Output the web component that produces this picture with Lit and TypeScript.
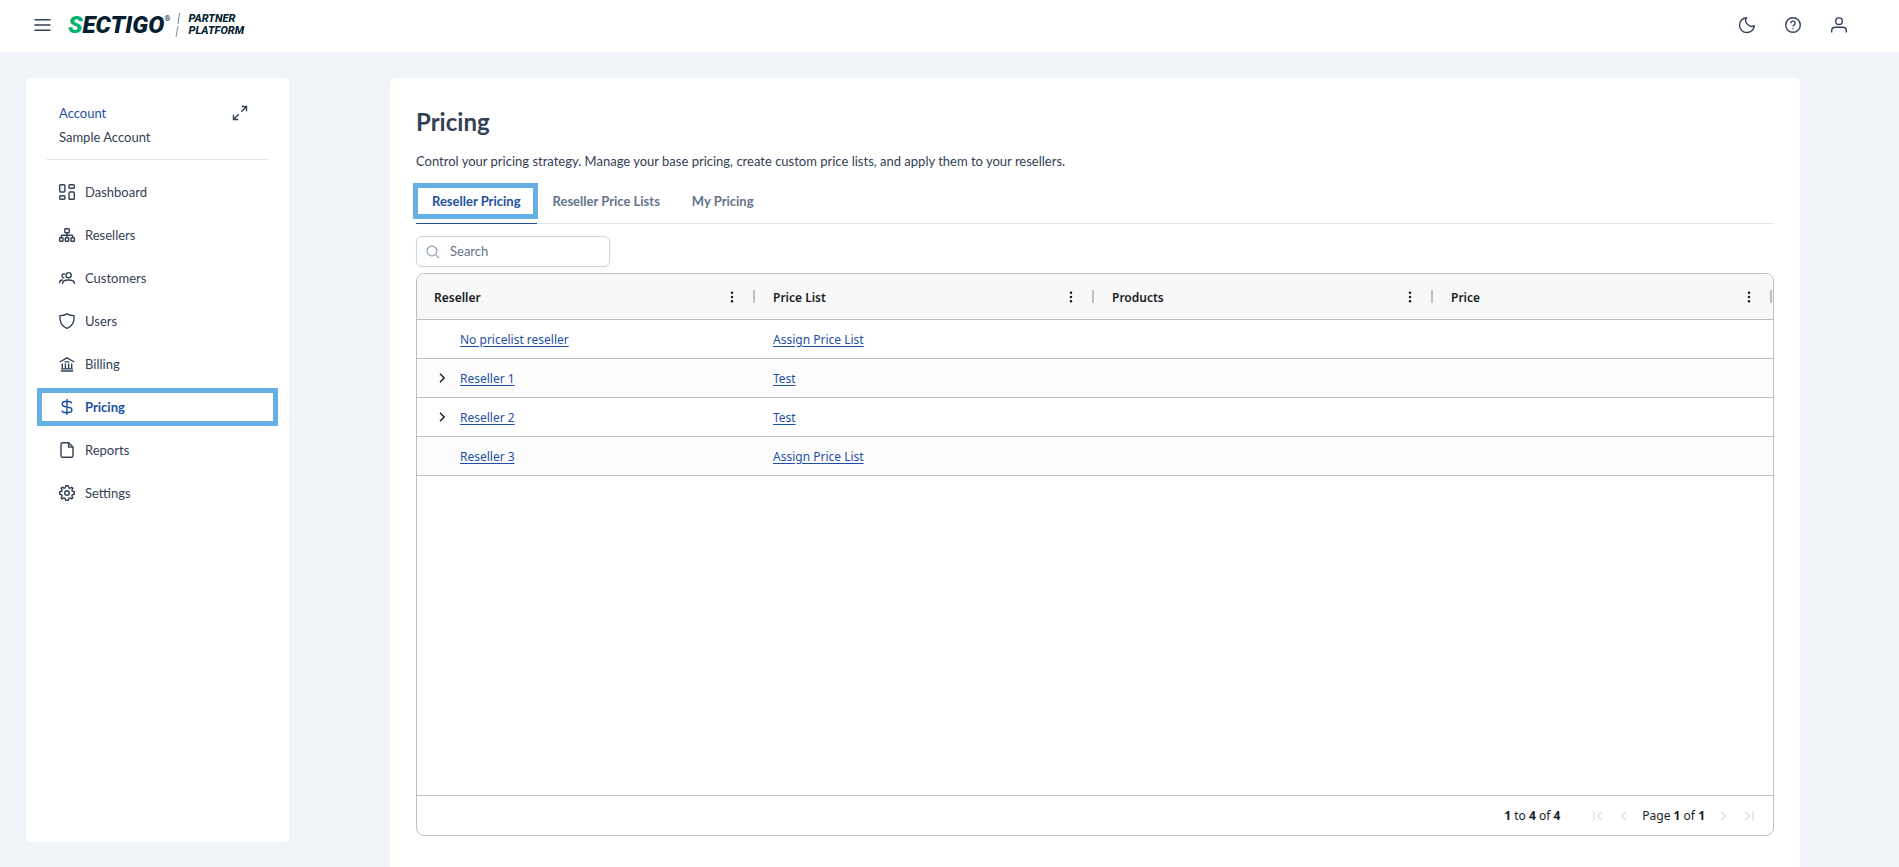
import { LitElement, html, svg, css, nothing } from "lit";
import type { SVGTemplateResult } from "lit";
import { customElement, property, state } from "lit/decorators.js";
import { classMap } from "lit/directives/class-map.js";

const glyphs: Record<string, SVGTemplateResult> = {
  menu: svg`<path d="M0 2.7H16M0 8H16M0 13.3H16"/>`,
  moon: svg`<path d="M7.2 .8A6.2 6.2 0 0 0 15.3 8.9 7.4 7.4 0 1 1 7.2 .8Z"/>`,
  help: svg`<circle cx="8" cy="8" r="7.3"/><path d="M5.9 6.2A2.1 2.1 0 1 1 8.9 8.1C8.2 8.5 8 8.8 8 9.6"/><path d="M8 11.3V12.2" stroke-width="1.5"/>`,
  user: svg`<circle cx="8" cy="4.2" r="3.3"/><path d="M.7 15.4V13.6C.7 11.5 2.4 10.3 4.4 10.3H11.6C13.6 10.3 15.3 11.5 15.3 13.6V15.4"/>`,
  expand: svg`<path d="M9.8 1.5H14.5V6.2M14.5 1.5L9.3 6.7M1.5 9.8V14.5H6.2M1.5 14.5L6.7 9.3"/>`,
  dashboard: svg`<rect x=".7" y=".7" width="5.2" height="7.3" rx=".9"/><rect x="10" y=".7" width="5.3" height="3.6" rx=".9"/><rect x=".7" y="11.7" width="5.2" height="3.6" rx=".9"/><rect x="10" y="8" width="5.3" height="7.3" rx=".9"/>`,
  sitemap: svg`<rect x="5.8" y="1.7" width="4.4" height="4" rx=".7"/><rect x=".6" y="10.8" width="3.4" height="3.5" rx=".6"/><rect x="6.3" y="10.8" width="3.4" height="3.5" rx=".6"/><rect x="12" y="10.8" width="3.4" height="3.5" rx=".6"/><path d="M8 5.7V10.8M2.3 10.8V8.9Q2.3 8.2 3 8.2H13Q13.7 8.2 13.7 8.9V10.8"/>`,
  users: svg`<circle cx="9.6" cy="5.2" r="2.6"/><path d="M3.6 14V13.3C3.6 11.3 5.8 10 9.5 10S15.4 11.3 15.4 13.3V14M6.1 4.2A2 2 0 1 0 5.4 7.8M.6 13.3V12.6C.6 11.1 1.8 10.2 3.8 9.8"/>`,
  shield: svg`<path d="M8 .8C5.8 2.1 3.2 2.6 1 2.6 .4 8.6 2.4 13.2 8 15.3 13.6 13.2 15.6 8.6 15 2.6 12.8 2.6 10.2 2.1 8 .8Z"/>`,
  bank: svg`<path d="M.7 6L8 1.9 15.3 6M1.8 15H14.2M2.2 12.9H13.8M3.3 7.4V12.7M6.4 7.4V12.7M9.6 7.4V12.7M12.7 7.4V12.7M5.5 5.9H10.5"/>`,
  dollar: svg`<path d="M8 0V16M12.6 4.6C12.6 3.1 11.2 2.5 9.6 2.5H6.2C4.3 2.5 3.2 3.6 3.2 5.1 3.2 6.6 4.2 7.2 5.6 7.5L10.4 8.5C11.9 8.8 12.9 9.5 12.9 10.9 12.9 12.5 11.7 13.5 9.8 13.5H6.2C4.4 13.5 3.1 12.8 3.1 11.4"/>`,
  file: svg`<path d="M9.6 .7H3.6Q2 .7 2 2.3V13.7Q2 15.3 3.6 15.3H12.4Q14 15.3 14 13.7V5.1ZM9.6 .7V5.1H14"/>`,
  cog: svg`<circle cx="8" cy="8" r="2.3"/><path d="M6.7 .8H9.3L9.8 2.8 11 3.3 12.8 2.2 13.9 3.3 12.9 5.1 13.3 6.3 15.3 6.8V9.3L13.3 9.8 12.8 11 13.8 12.8 12.8 13.9 11 12.8 9.8 13.3 9.3 15.3H6.7L6.2 13.3 5 12.8 3.2 13.9 2.1 12.8 3.2 11 2.7 9.8 .7 9.3V6.8L2.7 6.3 3.2 5.1 2.1 3.3 3.2 2.2 5 3.2 6.2 2.8Z" stroke-linejoin="round"/>`,
  search: svg`<circle cx="6.8" cy="6.8" r="5.6"/><path d="M11 11L15 15"/>`,
  kebab: svg`<g fill="currentColor" stroke="none"><circle cx="8" cy="3.2" r="1.4"/><circle cx="8" cy="8" r="1.4"/><circle cx="8" cy="12.8" r="1.4"/></g>`,
  next: svg`<path d="M6 3.8L10.2 8 6 12.2"/>`,
  prev: svg`<path d="M10 3.8L5.8 8 10 12.2"/>`,
  first: svg`<path d="M4 3.3V12.7M11.8 3.8L7.6 8 11.8 12.2"/>`,
  last: svg`<path d="M12 3.3V12.7M4.2 3.8L8.4 8 4.2 12.2"/>`,
};

@customElement("ui-icon")
export class UiIcon extends LitElement {
  @property() name = "";

  static styles = css`
    :host { display: inline-flex; flex: none; width: 16px; height: 16px; }
    svg { width: 100%; height: 100%; overflow: visible; fill: none; stroke: currentColor; stroke-width: 1.4; }
  `;

  render() {
    return html`<svg viewBox="0 0 16 16" aria-hidden="true">${glyphs[this.name]}</svg>`;
  }
}

@customElement("app-header")
export class AppHeader extends LitElement {
  static styles = css`
    :host { display: block; background: #fff; }
    .bar { display: flex; align-items: center; height: 50px; padding: 0 52px 2px 34px; color: #334155; }
    button { display: inline-flex; padding: 0; border: 0; background: none; color: inherit; cursor: pointer; }
    .brand { display: flex; align-items: center; margin-left: 17px; color: #04202f; text-decoration: none; font-family: Roboto, sans-serif; font-style: italic; }
    .name { font-size: 24px; line-height: 28px; font-weight: 900; }
    .name .initial { color: #00b373; }
    .reg { align-self: flex-start; font-size: 8px; line-height: 16px; font-style: normal; }
    .slash { width: 6px; height: 24px; margin: 0 8px 0 4px; stroke: #7c8a94; fill: none; }
    .product { font-size: 11px; line-height: 12px; font-weight: 800; }
    .actions { display: flex; gap: 30px; margin-left: auto; }
    .burger ui-icon { width: 17px; }
  `;

  render() {
    return html`
      <header class="bar">
        <button class="burger" aria-label="Menu"><ui-icon name="menu"></ui-icon></button>
        <a class="brand" href="#">
          <span class="name"><span class="initial">S</span>ECTIGO</span><span class="reg">®</span>
          <svg class="slash" viewBox="0 0 6 24" aria-hidden="true"><path d="M4.5 0L3 11M3.5 13L2.5 15 1 24"/></svg>
          <span class="product">PARTNER<br />PLATFORM</span>
        </a>
        <div class="actions">
          <button aria-label="Dark mode"><ui-icon name="moon"></ui-icon></button>
          <button aria-label="Help"><ui-icon name="help"></ui-icon></button>
          <button aria-label="Profile"><ui-icon name="user"></ui-icon></button>
        </div>
      </header>
    `;
  }
}

const menu = [
  ["dashboard", "Dashboard"],
  ["sitemap", "Resellers"],
  ["users", "Customers"],
  ["shield", "Users"],
  ["bank", "Billing"],
  ["dollar", "Pricing"],
  ["file", "Reports"],
  ["cog", "Settings"],
];

@customElement("app-sidebar")
export class AppSidebar extends LitElement {
  static styles = css`
    :host { display: block; box-sizing: border-box; padding: 23px 11px; border-radius: 5px; background: #fff; color: #334155; font-size: 13px; }
    .account { display: flex; justify-content: space-between; align-items: flex-start; margin: 0 9px; padding: 0 21px 10px 13px; border-bottom: 1px solid #e2e8f0; line-height: 24px; }
    .account a { color: #1e50a2; text-decoration: none; }
    .account button { display: inline-flex; margin: 4px 0; padding: 0; border: 0; background: none; color: inherit; }
    nav { display: flex; flex-direction: column; gap: 5px; margin-top: 13px; }
    .item { display: flex; align-items: center; gap: 10px; height: 28px; padding: 0 17px; border: 5px solid transparent; color: inherit; text-decoration: none; }
    .item.current { border-color: #66afe5; color: #1e50a2; font-weight: 700; }
  `;

  render() {
    return html`
      <div class="account">
        <div><a href="#">Account</a><div>Sample Account</div></div>
        <button aria-label="Switch account"><ui-icon name="expand"></ui-icon></button>
      </div>
      <nav>
        ${menu.map(([icon, label]) => html`
          <a href="#" class=${classMap({ item: true, current: label === "Pricing" })}>
            <ui-icon name=${icon}></ui-icon>${label}
          </a>`)}
      </nav>
    `;
  }
}

interface Row { name: string; list: string; expandable: boolean; }

const rows: Row[] = [
  { name: "No pricelist reseller", list: "Assign Price List", expandable: false },
  { name: "Reseller 1", list: "Test", expandable: true },
  { name: "Reseller 2", list: "Test", expandable: true },
  { name: "Reseller 3", list: "Assign Price List", expandable: false },
];

@customElement("price-grid")
export class PriceGrid extends LitElement {
  static styles = css`
    :host { display: flex; flex-direction: column; border: 1px solid #babfc7; border-radius: 8px; overflow: hidden; color: #181d1f; font-family: "Noto Sans", sans-serif; font-size: 12px; }
    .body { flex: 1; }
    table { width: 100%; table-layout: fixed; border-collapse: separate; border-spacing: 0; }
    th { position: relative; height: 43px; padding: 2px 17px 0; border-bottom: 1px solid #babfc7; background: #f8f8f8; text-align: left; font-weight: 600; }
    th::after { content: ""; position: absolute; right: 1px; top: 16px; width: 2px; height: 13px; background: #babfc7; }
    .head { display: flex; align-items: center; justify-content: space-between; }
    td { height: 38px; padding: 0 17px; border-bottom: 1px solid #babfc7; }
    tr:nth-child(even) td { background: #fcfcfc; }
    a { color: #1e50a2; text-underline-offset: 2px; }
    .cell { display: flex; align-items: center; }
    .toggle { display: inline-flex; width: 26px; }
    button { display: inline-flex; padding: 0; border: 0; background: none; color: inherit; }
    button:disabled { color: #dcdddd; }
    th ui-icon { width: 14px; height: 14px; }
    th button { margin-bottom: 2px; }
    .pager { display: flex; align-items: center; justify-content: flex-end; height: 39px; padding-right: 16px; border-top: 1px solid #babfc7; }
    .range { margin-right: 30px; }
    .pages { display: flex; align-items: center; gap: 10px; }
  `;

  render() {
    return html`
      <div class="body">
        <table>
          <thead>
            <tr>
              ${["Reseller", "Price List", "Products", "Price"].map((label) => html`
                <th scope="col"><div class="head">${label}<button aria-label="${label} column menu"><ui-icon name="kebab"></ui-icon></button></div></th>`)}
            </tr>
          </thead>
          <tbody>
            ${rows.map((row) => html`
              <tr>
                <td>
                  <div class="cell">
                    <span class="toggle">${row.expandable
                      ? html`<button aria-label="Expand ${row.name}"><ui-icon name="next"></ui-icon></button>`
                      : nothing}</span>
                    <a href="#">${row.name}</a>
                  </div>
                </td>
                <td><a href="#">${row.list}</a></td>
                <td></td>
                <td></td>
              </tr>`)}
          </tbody>
        </table>
      </div>
      <div class="pager">
        <span class="range"><b>1</b> to <b>4</b> of <b>4</b></span>
        <div class="pages">
          <button disabled aria-label="First page"><ui-icon name="first"></ui-icon></button>
          <button disabled aria-label="Previous page"><ui-icon name="prev"></ui-icon></button>
          <span>Page <b>1</b> of <b>1</b></span>
          <button disabled aria-label="Next page"><ui-icon name="next"></ui-icon></button>
          <button disabled aria-label="Last page"><ui-icon name="last"></ui-icon></button>
        </div>
      </div>
    `;
  }
}

@customElement("pricing-page")
export class PricingPage extends LitElement {
  @state() private tab = "Reseller Pricing";

  static styles = css`
    :host { display: flex; flex-direction: column; box-sizing: border-box; padding: 26px 26px 31px; border-radius: 5px 5px 0 0; background: #fff; color: #334155; font-size: 13px; }
    h1 { margin: 0; font-size: 24px; line-height: 36px; font-weight: 700; }
    p { margin: 11px 0; line-height: 20px; }
    .tabs { display: flex; border-bottom: 1px solid #e2e8f0; }
    .tab { position: relative; margin-bottom: -1px; padding: 0 16px 2px; border: 0; border-bottom: 1px solid transparent; background: none; color: #64748b; font: inherit; font-weight: 700; line-height: 39px; cursor: pointer; }
    .tab.current { border-color: #1e50a2; color: #1e50a2; }
    .tab.current::before { content: ""; position: absolute; inset: 1px -1px 4px -3px; border: 5px solid #66afe5; }
    .search { display: flex; align-items: center; gap: 10px; align-self: flex-start; box-sizing: border-box; width: 194px; height: 31px; margin: 12px 0 6px; padding: 0 9px; border: 1px solid #cbd5e1; border-radius: 6px; box-shadow: 0 1px 2px rgba(18, 18, 23, 0.05); color: #94a3b8; }
    .search ui-icon { width: 14px; height: 14px; }
    .search input { width: 100%; padding: 0 0 2px; border: 0; outline: 0; background: none; color: #334155; font: inherit; }
    .search input::placeholder { color: #64748b; opacity: 1; }
    price-grid { flex: 1; }
  `;

  render() {
    return html`
      <h1>Pricing</h1>
      <p>Control your pricing strategy. Manage your base pricing, create custom price lists, and apply them to your resellers.</p>
      <div class="tabs" role="tablist">
        ${["Reseller Pricing", "Reseller Price Lists", "My Pricing"].map((label) => html`
          <button role="tab" aria-selected=${this.tab === label} class=${classMap({ tab: true, current: this.tab === label })}
            @click=${() => (this.tab = label)}>${label}</button>`)}
      </div>
      <label class="search">
        <ui-icon name="search"></ui-icon>
        <input type="text" placeholder="Search" aria-label="Search" />
      </label>
      <price-grid></price-grid>
    `;
  }
}

@customElement("app-root")
export class AppRoot extends LitElement {
  static styles = css`
    :host { display: flex; flex-direction: column; min-height: 100vh; background: #f0f3f8; font-family: Lato, sans-serif; }
    .layout { display: flex; flex: 1; padding: 26px 0 0 26px; }
    app-sidebar { flex: none; width: 263px; margin-bottom: 25px; }
    .content { display: flex; flex: 1; padding: 0 99px 0 101px; }
    pricing-page { flex: 1; min-width: 0; }
  `;

  render() {
    return html`
      <app-header></app-header>
      <div class="layout">
        <app-sidebar></app-sidebar>
        <main class="content"><pricing-page></pricing-page></main>
      </div>
    `;
  }
}
